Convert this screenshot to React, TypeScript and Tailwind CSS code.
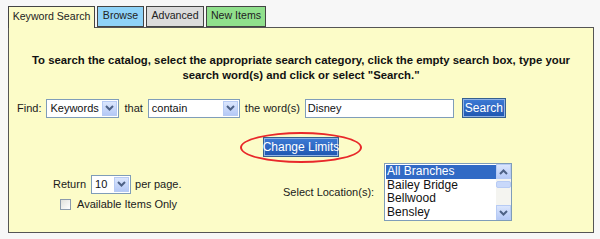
import React from 'react'

const font = { fontFamily: '"Liberation Sans", Arial, sans-serif' }

function Chevron({ up = false }: { up?: boolean }) {
  return (
    <svg width="9" height="6" viewBox="0 0 9 6" className={up ? 'rotate-180' : ''}>
      <path d="M1 1 L4.5 4.5 L8 1" fill="none" stroke="#4d6185" strokeWidth="2" />
    </svg>
  )
}

function ArrowBox({ className = '', up = false }: { className?: string; up?: boolean }) {
  return (
    <div
      className={`flex items-center justify-center border border-[#b7cbf4] bg-gradient-to-b from-[#dbe6fd] to-[#b5c9f6] ${className}`}
    >
      <Chevron up={up} />
    </div>
  )
}

function FakeSelect({ value, width }: { value: string; width: string }) {
  return (
    <div className={`flex h-[19px] items-stretch border border-[#7f9db9] bg-white ${width}`}>
      <div className="flex flex-1 items-center pl-[3px] text-[11px] text-[#111]">{value}</div>
      <ArrowBox className="m-px w-[15px]" />
    </div>
  )
}

function BlueButton({ label, className = '' }: { label: string; className?: string }) {
  return (
    <div
      className={`flex h-[20px] items-center justify-center whitespace-nowrap border border-[#36608f] bg-gradient-to-b from-[#3d7bd6] to-[#1f56b0] text-[12px] text-white shadow-[inset_0_0_0_1px_#8fb2e6] ${className}`}
    >
      {label}
    </div>
  )
}

export default function App() {
  const tabs = [
    { label: 'Keyword Search', cls: 'bg-[#fcfcc8] w-[87px] h-[22px] border-b-0 relative z-10' },
    { label: 'Browse', cls: 'bg-[#8fd3f8] w-[47px] h-[21px]' },
    { label: 'Advanced', cls: 'bg-[#dcdcdc] w-[58px] h-[21px]' },
    { label: 'New Items', cls: 'bg-[#90e08c] w-[60px] h-[21px]' },
  ]

  return (
    <div className="h-[239px] w-[600px] bg-[#f7f7f7] pl-[8px] pt-[6px] text-[#1a1a1a]" style={font}>
      <div className="flex items-start gap-[2px]">
        {tabs.map((t) => (
          <div
            key={t.label}
            className={`flex items-center justify-center border border-[#444] pb-[1px] text-[10.6px] text-[#222] ${t.cls}`}
          >
            {t.label}
          </div>
        ))}
      </div>
      <div className="-mt-px h-[206px] w-[586px] border border-[#555] bg-[#fcfcc8]">
        <div className="pt-[25px] text-center text-[11.35px] font-bold leading-[15px] text-[#111]">
          To search the catalog, select the appropriate search category, click the empty search box, type your
          <br />
          search word(s) and click or select &quot;Search.&quot;
        </div>

        <div className="mt-[15px] flex items-center pl-[8px] text-[11px]">
          <span className="mr-[5px]">Find:</span>
          <FakeSelect value="Keywords" width="w-[73px]" />
          <span className="mx-[5px]">that</span>
          <FakeSelect value="contain" width="w-[92px]" />
          <span className="mx-[5px]">the word(s)</span>
          <div className="flex h-[19px] w-[149px] items-center border border-[#7f9db9] bg-white pl-[2px] text-[11px] text-[#111]">
            Disney
          </div>
          <BlueButton label="Search" className="ml-[8px] w-[44px]" />
        </div>

        <div className="mt-[19px] flex justify-center">
          <div className="relative">
            <BlueButton label="Change Limits" className="w-[76px]" />
            <div className="pointer-events-none absolute -left-[23px] -top-[5px] h-[31px] w-[122px] rounded-[50%] border-2 border-[#e8282a]" />
          </div>
        </div>

        <div className="mt-[6px] flex items-center">
          <div className="ml-[44px] mt-[3px] flex w-[200px] flex-col">
            <div className="flex items-center text-[11px]">
              <span className="mr-[5px]">Return</span>
              <FakeSelect value="10" width="w-[40px]" />
              <span className="ml-[4px]">per page.</span>
            </div>
            <label className="ml-[7px] mt-[2px] flex items-center text-[11px]">
              <span className="mr-[6px] inline-block h-[11px] w-[11px] border border-[#8b9aac] bg-gradient-to-br from-[#e0e0dc] to-white" />
              Available Items Only
            </label>
          </div>
          <div className="ml-[30px] flex items-center">
            <span className="mr-[10px] text-[11px]">Select Location(s):</span>
            <div className="flex h-[58px] w-[128px] border border-[#7f9db9] bg-white">
              <div className="flex flex-1 flex-col pl-px pt-px text-[12px] leading-[13.5px] text-[#111]">
                <div className="bg-[#316ac5] pl-px text-white">All Branches</div>
                <div className="pl-px">Bailey Bridge</div>
                <div className="pl-px">Bellwood</div>
                <div className="pl-px">Bensley</div>
              </div>
              <div className="flex w-[15px] flex-col bg-[#f4f4f0]">
                <ArrowBox className="h-[15px]" up />
                <div className="mt-[2px] h-[7px] rounded-[2px] border border-[#b7cbf4] bg-[#c8d8fa]" />
                <div className="flex-1" />
                <ArrowBox className="h-[15px]" />
              </div>
            </div>
          </div>
        </div>
      </div>
    </div>
  )
}
